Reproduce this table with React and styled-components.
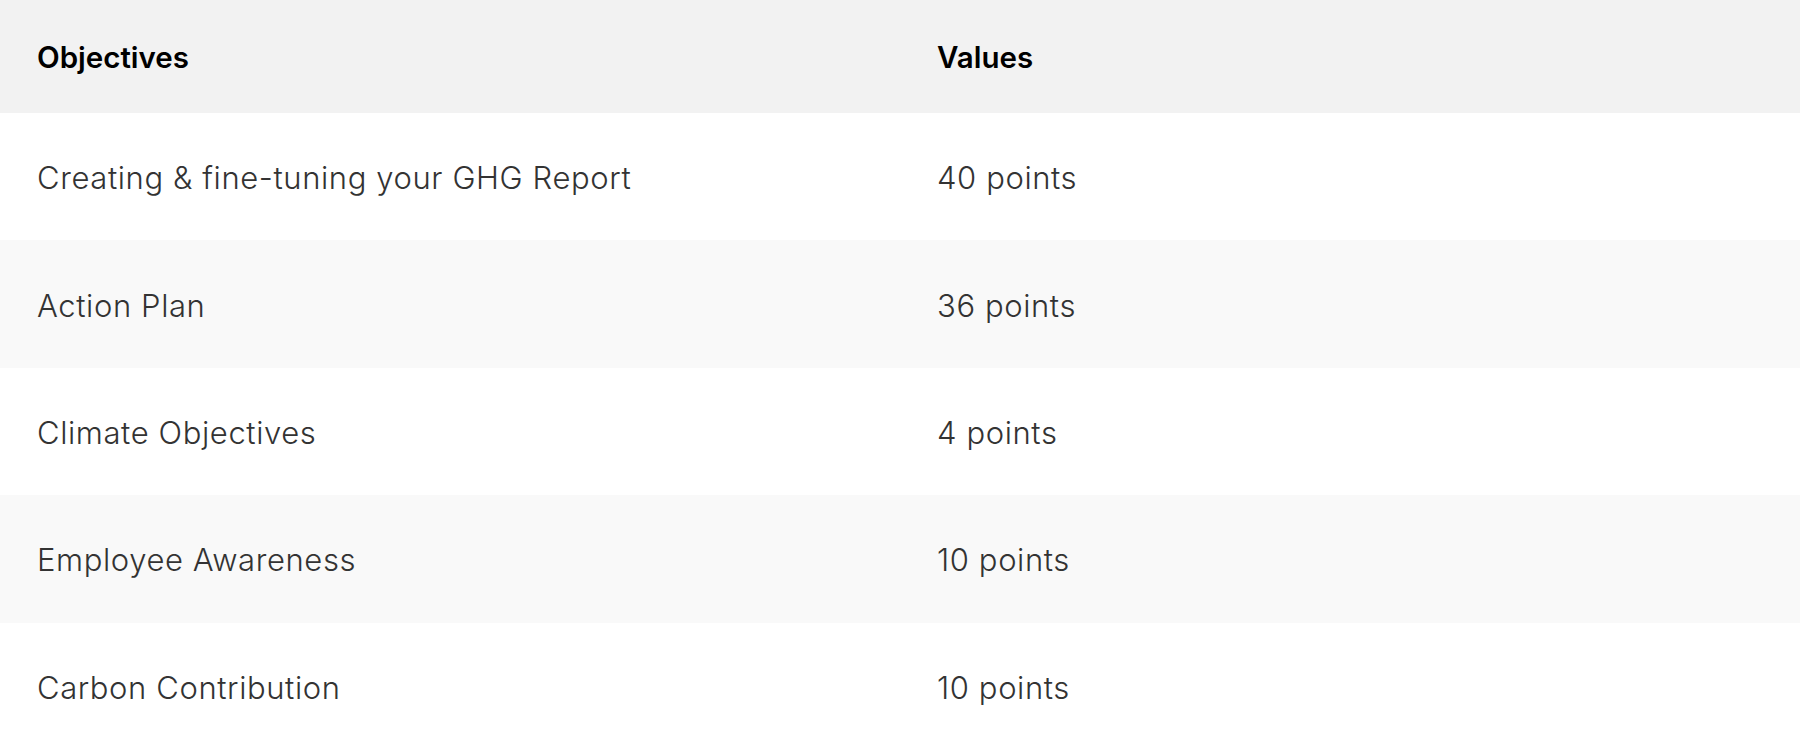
import styled, { createGlobalStyle } from 'styled-components';

const GlobalStyle = createGlobalStyle`
  html, body {
    margin: 0;
    padding: 0;
    background: #ffffff;
  }
  body {
    font-family: Inter, "Noto Sans", sans-serif;
  }
`;

const rows = [
  { objective: 'Creating & fine-tuning your GHG Report', value: '40 points' },
  { objective: 'Action Plan', value: '36 points' },
  { objective: 'Climate Objectives', value: '4 points' },
  { objective: 'Employee Awareness', value: '10 points' },
  { objective: 'Carbon Contribution', value: '10 points' },
];

const Table = styled.div`
  width: 100%;
  height: 750px;
  display: flex;
  flex-direction: column;
`;

const HeadRow = styled.div`
  height: 113px;
  flex-shrink: 0;
  display: grid;
  grid-template-columns: 1fr 1fr;
  background-color: #f2f2f2;
`;

const Row = styled.div`
  flex: 1;
  display: grid;
  grid-template-columns: 1fr 1fr;
  background-color: ${(p) => (p.$striped ? '#f9f9f9' : '#ffffff')};
`;

const HeadCell = styled.div`
  display: flex;
  align-items: center;
  padding-left: 37px;
  font-size: 29.5px;
  font-weight: 600;
  color: #000000;
`;

const Cell = styled.div`
  display: flex;
  align-items: center;
  padding-left: 37px;
  padding-top: 2px;
  font-size: 31px;
  font-weight: 300;
  letter-spacing: 0.6px;
  color: #333333;
`;

const App = () => {
  return (
    <>
      <GlobalStyle />
      <Table>
        <HeadRow>
          <HeadCell>Objectives</HeadCell>
          <HeadCell>Values</HeadCell>
        </HeadRow>
        {rows.map((r, i) => (
          <Row key={r.objective} $striped={i % 2 === 1}>
            <Cell>{r.objective}</Cell>
            <Cell>{r.value}</Cell>
          </Row>
        ))}
      </Table>
    </>
  );
};

export default App;
